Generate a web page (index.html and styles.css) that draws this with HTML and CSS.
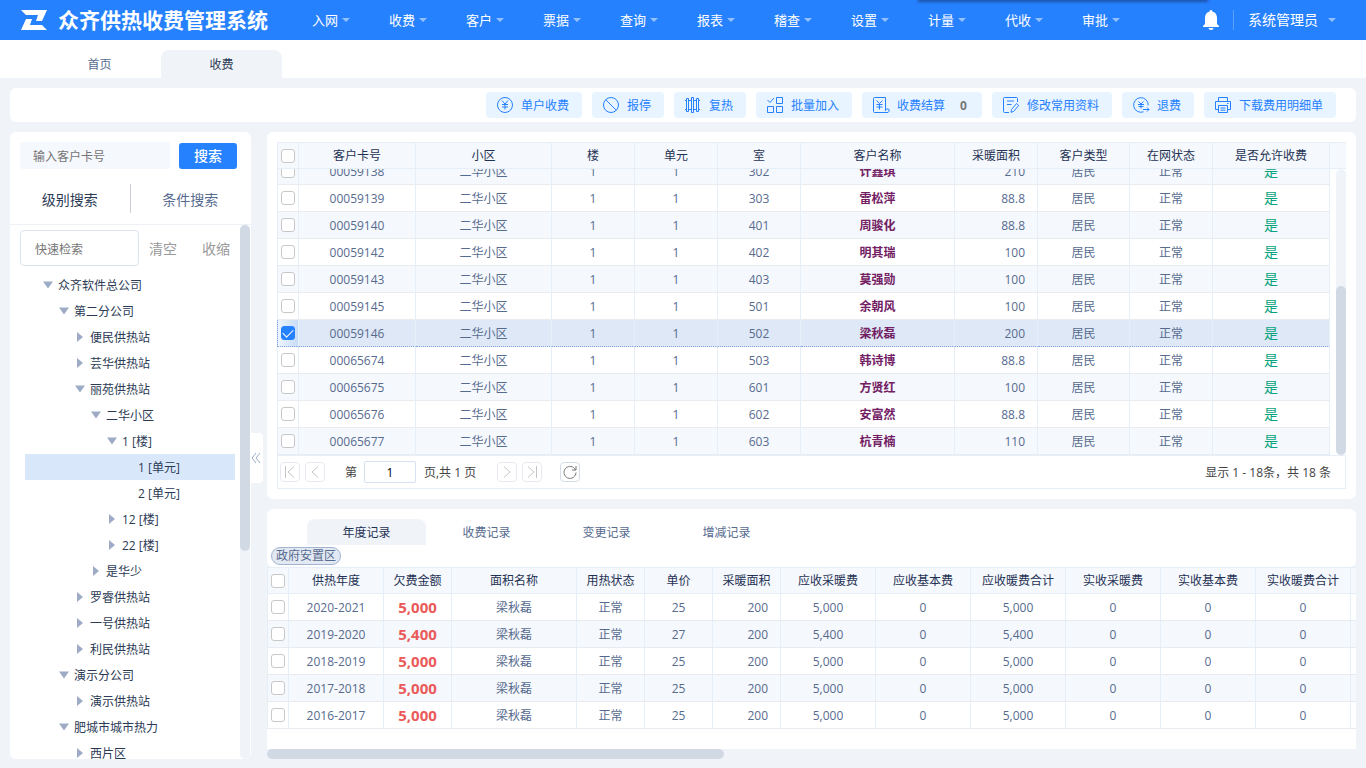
FILE: index.html
```
<!DOCTYPE html>
<html lang="zh-CN">
<head>
  <meta charset="UTF-8">
  <meta name="viewport" content="width=device-width, initial-scale=1.0">
  <title>众齐供热收费管理系统</title>
  <link rel="stylesheet" href="styles.css">
</head>
<body>
  <header class="header">
    <div class="header-shadow"></div>
    <svg class="logo" viewBox="0 0 26 20"><path d="M0 0H26L21 11H15L17 5H5Z"/><path d="M26 20H0L5 9H11L9 15H21Z"/></svg>
    <h1 class="title">众齐供热收费管理系统</h1>
    <nav class="nav">
      <a href="#" class="nav-item">入网</a>
      <a href="#" class="nav-item">收费</a>
      <a href="#" class="nav-item">客户</a>
      <a href="#" class="nav-item">票据</a>
      <a href="#" class="nav-item">查询</a>
      <a href="#" class="nav-item">报表</a>
      <a href="#" class="nav-item">稽查</a>
      <a href="#" class="nav-item">设置</a>
      <a href="#" class="nav-item">计量</a>
      <a href="#" class="nav-item">代收</a>
      <a href="#" class="nav-item">审批</a>
    </nav>
    <button class="bell" aria-label="消息">
      <svg width="16" height="20" viewBox="0 0 16 20"><path d="M8 0a1.300 1.300 0 0 1 1.300 1.400C12 2 14 4.300 14 7.500V14l2 2v1H0v-1l2-2V7.500C2 4.300 4 2 6.700 1.400A1.300 1.300 0 0 1 8 0zM5.500 18h5a2.500 2 0 0 1-5 0z"/></svg>
    </button>
    <a href="#" class="user">系统管理员</a>
  </header>

  <nav class="page-tabs">
    <a href="#" class="page-tab">首页</a>
    <a href="#" class="page-tab active">收费</a>
  </nav>

  <main class="main">
    <div class="toolbar">
      <button class="tool"><svg viewBox="0 0 18 18"><circle cx="9" cy="9" r="7.500"/><path d="M6 4.500l3 3.500 3-3.500M9 8v5.500M6 8.500h6M6 11h6"/></svg>单户收费</button>
      <button class="tool"><svg viewBox="0 0 18 18"><circle cx="9" cy="9" r="7.500"/><path d="M3.700 3.700l10.600 10.600"/></svg>报停</button>
      <button class="tool"><svg viewBox="0 0 18 18"><path d="M2.500 2.500v13h2v-13zM7.500 1.500v15h2v-15zM12.500 2.500v13h2v-13zM1 4.500h1.500M4.500 4.500h3M9.500 4.500h3M14.500 4.500h1.500M1 13.500h1.500M4.500 13.500h3M9.500 13.500h3M14.500 13.500h1.500"/></svg>复热</button>
      <button class="tool"><svg viewBox="0 0 18 18"><path d="M1.500 4l2.500 2.500L8 2M10.500 1.500h6v6h-6zM1.500 10.500h6v6h-6zM10.500 10.500h6v6h-6z"/></svg>批量加入</button>
      <button class="tool"><svg viewBox="0 0 18 18"><path d="M13.500 13V1.500h-11a1 1 0 0 0-1 1v13a1 1 0 0 0 1 1h12.500a2 2 0 0 0 1.500-3.500h-3v2M4.500 4.500l3 3 3-3M7.500 7.500v6M4.500 8.500h6M4.500 11h6"/></svg>收费结算<b class="tool-count">0</b></button>
      <button class="tool"><svg viewBox="0 0 18 18"><path d="M15.500 6V2.500a1 1 0 0 0-1-1h-12a1 1 0 0 0-1 1v13a1 1 0 0 0 1 1H7M5 5h7M5 8.500h4.500M9.500 13.500l5-6 2.200 1.900-5 6-2.700.900z"/></svg>修改常用资料</button>
      <button class="tool"><svg viewBox="0 0 18 18"><path d="M11.500 15.800A7.300 7.300 0 1 1 16.200 9.500M6.500 5.500l2.500 2.500 2.500-2.500M9 8v4.500M6 8.500h6M6.500 10.500h5M11 13.500h6M15 11.500l2 2-2 2"/></svg>退费</button>
      <button class="tool"><svg viewBox="0 0 18 18"><path d="M4.500 5V1.500h9V5M4.500 13.500h-3v-8h15v8h-3M4.500 9.500h9v7h-9zM6.500 12h5M6.500 14.200h5M13 7.500h1.500"/></svg>下载费用明细单</button>
    </div>

    <div class="content">
      <aside class="side">
        <div class="search">
          <input class="search-input" type="text" placeholder="输入客户卡号" aria-label="客户卡号">
          <button class="search-btn">搜索</button>
        </div>
        <div class="side-tabs">
          <button class="side-tab active">级别搜索</button>
          <button class="side-tab">条件搜索</button>
        </div>
        <div class="side-body">
          <div class="side-scroll">
            <div class="filter">
              <input class="filter-input" type="text" placeholder="快速检索" aria-label="快速检索">
              <button class="filter-btn">清空</button>
              <button class="filter-btn">收缩</button>
            </div>
            <ul class="tree">
              <li class="node open">众齐软件总公司</li>
              <li class="node open lv1">第二分公司</li>
              <li class="node closed lv2">便民供热站</li>
              <li class="node closed lv2">芸华供热站</li>
              <li class="node open lv2">丽苑供热站</li>
              <li class="node open lv3">二华小区</li>
              <li class="node open lv4">1 [楼]</li>
              <li class="node lv5 selected">1 [单元]</li>
              <li class="node lv5">2 [单元]</li>
              <li class="node closed lv4">12 [楼]</li>
              <li class="node closed lv4">22 [楼]</li>
              <li class="node closed lv3">是华少</li>
              <li class="node closed lv2">罗睿供热站</li>
              <li class="node closed lv2">一号供热站</li>
              <li class="node closed lv2">利民供热站</li>
              <li class="node open lv1">演示分公司</li>
              <li class="node closed lv2">演示供热站</li>
              <li class="node open lv1">肥城市城市热力</li>
              <li class="node closed lv2">西片区</li>
            </ul>
          </div>
          <div class="track side-track"><div class="thumb side-thumb"></div></div>
        </div>
      </aside>

      <div class="splitter">
        <button class="collapse" aria-label="收起"><svg width="10" height="12" viewBox="0 0 10 12"><path d="M5 1L1 6l4 5M9 1L5 6l4 5"/></svg></button>
      </div>

      <div class="right">
        <section class="panel customers">
          <div class="grid-head">
            <table class="grid customer-grid">
              <colgroup><col class="c-check"><col class="c-card"><col class="c-area"><col class="c-short"><col class="c-short"><col class="c-short"><col><col class="c-short"><col class="c-type"><col class="c-short"><col class="c-card"></colgroup>
              <thead>
                <tr><th><input type="checkbox" aria-label="全选客户"></th><th>客户卡号</th><th>小区</th><th>楼</th><th>单元</th><th>室</th><th>客户名称</th><th>采暖面积</th><th>客户类型</th><th>在网状态</th><th>是否允许收费</th></tr>
              </thead>
            </table>
          </div>
          <div class="grid-view">
            <div class="grid-scroll">
              <table class="grid customer-grid">
                <colgroup><col class="c-check"><col class="c-card"><col class="c-area"><col class="c-short"><col class="c-short"><col class="c-short"><col><col class="c-short"><col class="c-type"><col class="c-short"><col class="c-card"></colgroup>
                <tbody>
                  <tr class="alt"><td><input type="checkbox" aria-label="选择 00059138"></td><td>00059138</td><td>二华小区</td><td>1</td><td>1</td><td>302</td><td class="name">计鑫琪</td><td class="num">210</td><td>居民</td><td>正常</td><td class="yes">是</td></tr>
                  <tr><td><input type="checkbox" aria-label="选择 00059139"></td><td>00059139</td><td>二华小区</td><td>1</td><td>1</td><td>303</td><td class="name">雷松萍</td><td class="num">88.8</td><td>居民</td><td>正常</td><td class="yes">是</td></tr>
                  <tr class="alt"><td><input type="checkbox" aria-label="选择 00059140"></td><td>00059140</td><td>二华小区</td><td>1</td><td>1</td><td>401</td><td class="name">周骏化</td><td class="num">88.8</td><td>居民</td><td>正常</td><td class="yes">是</td></tr>
                  <tr><td><input type="checkbox" aria-label="选择 00059142"></td><td>00059142</td><td>二华小区</td><td>1</td><td>1</td><td>402</td><td class="name">明其瑞</td><td class="num">100</td><td>居民</td><td>正常</td><td class="yes">是</td></tr>
                  <tr class="alt"><td><input type="checkbox" aria-label="选择 00059143"></td><td>00059143</td><td>二华小区</td><td>1</td><td>1</td><td>403</td><td class="name">莫强勋</td><td class="num">100</td><td>居民</td><td>正常</td><td class="yes">是</td></tr>
                  <tr><td><input type="checkbox" aria-label="选择 00059145"></td><td>00059145</td><td>二华小区</td><td>1</td><td>1</td><td>501</td><td class="name">余朝风</td><td class="num">100</td><td>居民</td><td>正常</td><td class="yes">是</td></tr>
                  <tr class="picked"><td><input type="checkbox" aria-label="选择 00059146" checked></td><td>00059146</td><td>二华小区</td><td>1</td><td>1</td><td>502</td><td class="name">梁秋磊</td><td class="num">200</td><td>居民</td><td>正常</td><td class="yes">是</td></tr>
                  <tr><td><input type="checkbox" aria-label="选择 00065674"></td><td>00065674</td><td>二华小区</td><td>1</td><td>1</td><td>503</td><td class="name">韩诗博</td><td class="num">88.8</td><td>居民</td><td>正常</td><td class="yes">是</td></tr>
                  <tr class="alt"><td><input type="checkbox" aria-label="选择 00065675"></td><td>00065675</td><td>二华小区</td><td>1</td><td>1</td><td>601</td><td class="name">方贤红</td><td class="num">100</td><td>居民</td><td>正常</td><td class="yes">是</td></tr>
                  <tr><td><input type="checkbox" aria-label="选择 00065676"></td><td>00065676</td><td>二华小区</td><td>1</td><td>1</td><td>602</td><td class="name">安富然</td><td class="num">88.8</td><td>居民</td><td>正常</td><td class="yes">是</td></tr>
                  <tr class="alt"><td><input type="checkbox" aria-label="选择 00065677"></td><td>00065677</td><td>二华小区</td><td>1</td><td>1</td><td>603</td><td class="name">杭青楠</td><td class="num">110</td><td>居民</td><td>正常</td><td class="yes">是</td></tr>
                </tbody>
              </table>
            </div>
            <div class="track grid-track"><div class="thumb grid-thumb"></div></div>
          </div>
          <div class="pager">
            <button class="page-btn" aria-label="首页"><svg viewBox="0 0 18 18"><path d="M4.500 3v12M13 3.500L7 9l6 5.500"/></svg></button>
            <button class="page-btn" aria-label="上一页"><svg viewBox="0 0 18 18"><path d="M12 3.500L6 9l6 5.500"/></svg></button>
            <label class="page-label" for="page">第</label>
            <input class="page-input" id="page" type="text" value="1">
            <span class="page-total">页,共 1 页</span>
            <button class="page-btn" aria-label="下一页"><svg viewBox="0 0 18 18"><path d="M6 3.500L12 9l-6 5.500"/></svg></button>
            <button class="page-btn" aria-label="末页"><svg viewBox="0 0 18 18"><path d="M13.500 3v12M5 3.500L11 9l-6 5.500"/></svg></button>
            <button class="page-btn refresh" aria-label="刷新"><svg viewBox="0 0 18 18"><path d="M14.500 7A6 6 0 1 0 15 9.500M15 3v4h-4"/></svg></button>
            <span class="page-info">显示 1 - 18条，共 18 条</span>
          </div>
        </section>

        <section class="records">
          <div class="panel records-top">
            <div class="record-tabs">
              <button class="record-tab active">年度记录</button>
              <button class="record-tab">收费记录</button>
              <button class="record-tab">变更记录</button>
              <button class="record-tab">增减记录</button>
            </div>
            <span class="tag">政府安置区</span>
          </div>
          <div class="record-view">
            <table class="grid record-grid">
              <colgroup><col class="c-check"><col class="c-fee"><col class="c-small"><col class="c-name"><col class="c-small"><col class="c-small"><col class="c-small"><col class="c-fee"><col class="c-fee"><col class="c-fee"><col class="c-fee"><col class="c-fee"><col class="c-fee"><col class="c-fee"></colgroup>
              <thead>
                <tr><th><input type="checkbox" aria-label="全选年度"></th><th>供热年度</th><th>欠费金额</th><th>面积名称</th><th>用热状态</th><th>单价</th><th>采暖面积</th><th>应收采暖费</th><th>应收基本费</th><th>应收暖费合计</th><th>实收采暖费</th><th>实收基本费</th><th>实收暖费合计</th><th></th></tr>
              </thead>
              <tbody>
                <tr><td><input type="checkbox" aria-label="选择 2020-2021"></td><td>2020-2021</td><td class="debt">5,000</td><td>梁秋磊</td><td>正常</td><td>25</td><td class="num">200</td><td>5,000</td><td>0</td><td>5,000</td><td>0</td><td>0</td><td>0</td><td></td></tr>
                <tr class="alt"><td><input type="checkbox" aria-label="选择 2019-2020"></td><td>2019-2020</td><td class="debt">5,400</td><td>梁秋磊</td><td>正常</td><td>27</td><td class="num">200</td><td>5,400</td><td>0</td><td>5,400</td><td>0</td><td>0</td><td>0</td><td></td></tr>
                <tr><td><input type="checkbox" aria-label="选择 2018-2019"></td><td>2018-2019</td><td class="debt">5,000</td><td>梁秋磊</td><td>正常</td><td>25</td><td class="num">200</td><td>5,000</td><td>0</td><td>5,000</td><td>0</td><td>0</td><td>0</td><td></td></tr>
                <tr class="alt"><td><input type="checkbox" aria-label="选择 2017-2018"></td><td>2017-2018</td><td class="debt">5,000</td><td>梁秋磊</td><td>正常</td><td>25</td><td class="num">200</td><td>5,000</td><td>0</td><td>5,000</td><td>0</td><td>0</td><td>0</td><td></td></tr>
                <tr><td><input type="checkbox" aria-label="选择 2016-2017"></td><td>2016-2017</td><td class="debt">5,000</td><td>梁秋磊</td><td>正常</td><td>25</td><td class="num">200</td><td>5,000</td><td>0</td><td>5,000</td><td>0</td><td>0</td><td>0</td><td></td></tr>
              </tbody>
            </table>
          </div>
          <div class="record-track"><div class="thumb record-thumb"></div></div>
        </section>
      </div>
    </div>
  </main>
</body>
</html>
```

FILE: styles.css
```
* {
  box-sizing: border-box;
}
body {
  margin: 0;
  height: 100vh;
  display: flex;
  flex-direction: column;
  overflow: hidden;
  background: #f0f4f9;
  color: #2b3a55;
  font: 12px/18px "Open Sans", "Noto Sans CJK SC", sans-serif;
}
a {
  color: inherit;
  text-decoration: none;
}
button, input {
  font: inherit;
  margin: 0;
}
button {
  padding: 0;
  border: none;
  background: none;
  color: inherit;
  cursor: pointer;
  white-space: nowrap;
}
svg {
  display: block;
  flex: none;
}

/* header */
.header {
  position: relative;
  flex: none;
  display: flex;
  align-items: center;
  height: 40px;
  padding: 0 30px 0 21px;
  background: #2681ff;
  color: #fff;
  overflow: hidden;
}
.header-shadow {
  position: absolute;
  top: -10px;
  right: 160px;
  width: 286px;
  height: 10px;
  box-shadow: 0 0 3px 2px rgba(20, 50, 110, 0.6);
}
.logo {
  width: 26px;
  height: 20px;
  fill: #fff;
}
.title {
  margin: 0 0 0 11px;
  width: 254px;
  font-size: 21px;
  line-height: 40px;
  font-weight: bold;
  white-space: nowrap;
}
.nav {
  display: flex;
  flex: 1;
}
.nav-item {
  display: flex;
  align-items: center;
  width: 77px;
  font-size: 13px;
  line-height: 40px;
}
.nav-item::after,
.user::after {
  content: "";
  margin-left: 4px;
  border: 4px solid transparent;
  border-top-color: #93c0ff;
  border-bottom: none;
}
.bell {
  margin-right: 14px;
}
.bell svg {
  fill: #fff;
}
.user {
  display: flex;
  align-items: center;
  height: 20px;
  padding-left: 14px;
  border-left: 1px solid #5ea2ff;
  font-size: 14px;
}
.user::after {
  margin-left: 10px;
}

/* page tabs */
.page-tabs {
  flex: none;
  display: flex;
  align-items: flex-end;
  height: 38px;
  padding-left: 39px;
  background: #fff;
}
.page-tab {
  width: 121px;
  padding-top: 2px;
  line-height: 26px;
  text-align: center;
  color: #576b8f;
}
.page-tab.active {
  margin-left: 1px;
  background: #f0f4f9;
  border-radius: 8px 8px 0 0;
  color: #2b3a55;
}

/* toolbar */
.main {
  flex: 1;
  min-height: 0;
  display: flex;
  flex-direction: column;
  gap: 10px;
  padding: 10px 10px 9px;
}
.toolbar {
  flex: none;
  display: flex;
  justify-content: flex-end;
  align-items: center;
  gap: 10px;
  height: 34px;
  padding-right: 20px;
  background: #fff;
  border-radius: 6px;
}
.tool {
  display: flex;
  align-items: center;
  height: 26px;
  padding: 2px 13px 0 10px;
  border-radius: 4px;
  background: #e8f4ff;
  color: #2681ff;
}
.tool svg {
  width: 18px;
  height: 18px;
  margin: 0 7px 2px 0;
  fill: none;
  stroke: #2681ff;
}
.tool-count {
  margin: 0 2px 0 15px;
  color: #777;
}

/* side panel */
.content {
  flex: 1;
  min-height: 0;
  display: flex;
}
.side {
  flex: none;
  display: flex;
  flex-direction: column;
  width: 241px;
  background: #fff;
  border-radius: 6px;
  overflow: hidden;
}
.search {
  display: flex;
  align-items: center;
  gap: 9px;
  padding: 10px 14px 0 10px;
}
.search-input {
  flex: 1;
  min-width: 0;
  height: 27px;
  padding: 2px 13px 0;
  border: none;
  border-radius: 3px;
  background: #f5f8fc;
}
.search-btn {
  width: 58px;
  height: 26px;
  border-radius: 3px;
  background: #2681ff;
  color: #fff;
  font-size: 14px;
  font-weight: 500;
}
::placeholder {
  color: #757575;
}
.side-tabs {
  display: flex;
  align-items: center;
  height: 56px;
  padding: 4px 1px 0 0;
  border-bottom: 1px solid #edf1f6;
}
.side-tab {
  flex: 1;
  height: 29px;
  padding-top: 2px;
  font-size: 14px;
  color: #576b8f;
}
.side-tab.active {
  border-right: 1px solid #c9ced6;
  color: #2b3a55;
}
.side-body {
  flex: 1;
  min-height: 0;
  display: flex;
}
.side-scroll {
  flex: 1;
  overflow: hidden;
}
.track {
  flex: none;
  width: 10px;
  border-radius: 5px;
  background: #f0f4f9;
}
.thumb {
  border-radius: 5px;
  background: #d1d9e4;
}
.side-track {
  margin-right: 1px;
}
.side-thumb {
  height: 61%;
}
.filter {
  display: flex;
  align-items: center;
  padding: 5px 10px 6px;
}
.filter-input {
  flex: 1;
  min-width: 0;
  height: 36px;
  padding: 2px 14px 0;
  border: 1px solid #dbe3ef;
  border-radius: 4px;
}
.filter-btn {
  margin-left: 10px;
  padding-top: 2px;
  font-size: 14px;
  color: #999;
}
.filter-btn + .filter-btn {
  margin-left: 25px;
}
.tree {
  margin: 0;
  padding: 0 5px 0 15px;
  list-style: none;
}
.node {
  display: flex;
  align-items: center;
  height: 26px;
  padding: 2px 0 0 33px;
  white-space: nowrap;
}
.node.open::before,
.node.closed::before {
  content: "";
  width: 10px;
  height: 10px;
  margin: 0 5px 2px -15px;
  background: #9dabc6;
  clip-path: polygon(0 15%, 100% 15%, 50% 85%);
}
.node.closed::before {
  clip-path: polygon(20% 0, 80% 50%, 20% 100%);
}
.lv1 {
  padding-left: 49px;
}
.lv2 {
  padding-left: 65px;
}
.lv3 {
  padding-left: 81px;
}
.lv4 {
  padding-left: 97px;
}
.lv5 {
  padding-left: 113px;
}
.selected {
  background: #d9e7fb;
}
.splitter {
  flex: none;
  display: flex;
  align-items: center;
  width: 16px;
}
.collapse {
  width: 12px;
  height: 50px;
  margin-top: 25px;
  border-radius: 0 4px 4px 0;
  background: #fff;
}
.collapse svg {
  fill: none;
  stroke: #9dabc6;
}

/* grids */
.right {
  flex: 1;
  min-width: 0;
  display: flex;
  flex-direction: column;
  gap: 10px;
}
.panel {
  background: #fff;
  border-radius: 6px;
}
.customers {
  flex: 1;
  min-height: 0;
  display: flex;
  flex-direction: column;
  padding: 10px;
}
.grid {
  table-layout: fixed;
  width: 100%;
  border-collapse: separate;
  border-spacing: 0;
}
.grid th,
.grid td {
  height: 27px;
  padding: 0;
  border-right: 1px solid #e6eef8;
  border-bottom: 1px solid #e8ebef;
  text-align: center;
  white-space: nowrap;
  color: #576b8f;
}
.grid td + td {
  padding-top: 2px;
}
.grid th {
  border-top: 1px solid #e6eef8;
  border-bottom-color: #e6eef8;
  background: #f5f8fc;
  font-weight: normal;
  color: #1f3254;
}
.grid th:first-child,
.grid td:first-child {
  border-left: 1px solid #e6eef8;
}
.c-check {
  width: 22px;
}
.c-card {
  width: 117px;
}
.c-area {
  width: 136px;
}
.c-short {
  width: 83px;
}
.c-type {
  width: 92px;
}
.c-fee {
  width: 95px;
}
.c-small {
  width: 68px;
}
.c-name {
  width: 125px;
}
.grid .alt td {
  background: #f5f8fc;
}
.grid .num {
  padding-right: 12px;
  text-align: right;
}
.grid .name {
  font-weight: bold;
  color: #722063;
}
.grid .yes {
  padding-top: 0;
  font-size: 14px;
  color: #07a37e;
}
.grid .debt {
  padding-top: 0;
  font-size: 15px;
  font-weight: bold;
  color: #ea5a5a;
}
.grid .picked td {
  border-bottom: 1px dotted #82a6e4;
  background: #dee8f6;
}
.grid .picked td:first-child {
  border-left: 1px dotted #82a6e4;
  background: linear-gradient(to right, #eff5fd, #c7ddf8);
}
input[type="checkbox"] {
  appearance: none;
  display: grid;
  place-content: center;
  width: 14px;
  height: 14px;
  margin: 0 auto;
  border: 1px solid #c8c8c8;
  border-radius: 3px;
  background: #fff;
}
input[type="checkbox"]:checked {
  border-color: #2681ff;
  background: #2681ff;
}
input[type="checkbox"]:checked::before {
  content: "";
  width: 9px;
  height: 5px;
  margin-bottom: 3px;
  border-left: 1px solid #fff;
  border-bottom: 1px solid #fff;
  transform: rotate(-45deg);
}
.grid-head {
  flex: none;
  padding-right: 16px;
  background: linear-gradient(#e6eef8 1px, #f5f8fc 1px, #f5f8fc 26px, #e6eef8 26px);
}
.grid-view {
  flex: 1;
  min-height: 0;
  display: flex;
  gap: 6px;
}
/* the list is scrolled to its last row */
.grid-scroll {
  flex: 1;
  min-width: 0;
  display: flex;
  flex-direction: column;
  justify-content: flex-end;
  overflow: hidden;
}
.grid-track {
  display: flex;
  align-items: flex-end;
}
.grid-thumb {
  width: 10px;
  height: 59%;
}

/* pager */
.pager {
  flex: none;
  display: flex;
  align-items: center;
  height: 34px;
  padding: 0 14px 0 2px;
  border: 1px solid #e6eef8;
  color: #444;
}
.page-btn {
  width: 20px;
  height: 20px;
  margin-right: 5px;
  border: 1px solid #e6eaf0;
  border-radius: 4px;
}
.page-btn svg {
  fill: none;
  stroke: #c4c4c4;
}
.page-btn.refresh {
  margin-left: 13px;
  border-color: #d5dce8;
}
.refresh svg {
  stroke: #777;
}
.page-label,
.page-total,
.page-info {
  padding-top: 2px;
}
.page-label {
  margin: 0 7px 0 15px;
}
.page-input {
  width: 52px;
  height: 22px;
  padding: 0;
  border: 1px solid #d5e0f0;
  border-radius: 2px;
  text-align: center;
}
.page-total {
  margin: 0 21px 0 8px;
}
.page-info {
  margin-left: auto;
}

/* records */
.records {
  flex: none;
  display: flex;
  flex-direction: column;
  height: 250px;
}
.records-top {
  height: 58px;
  padding: 10px 4px 0;
}
.record-tabs {
  display: flex;
  gap: 1px;
  padding-left: 36px;
}
.record-tab {
  width: 119px;
  height: 26px;
  padding-top: 2px;
  color: #576b8f;
}
.record-tab.active {
  border-radius: 8px 8px 0 0;
  background: #f0f4f9;
  color: #1f3254;
}
.tag {
  display: block;
  width: max-content;
  margin-top: 2px;
  padding: 0 4px;
  border: 1px solid #a3b4d2;
  border-radius: 9px;
  background: #e3e9f3;
  line-height: 16px;
  color: #576b8f;
}
.record-view {
  flex: 1;
  min-height: 0;
  background: #fff;
  overflow: hidden;
}
.record-grid {
  width: 1179px;
}
.record-track {
  height: 10px;
}
.record-thumb {
  width: 42%;
  height: 10px;
}
```
